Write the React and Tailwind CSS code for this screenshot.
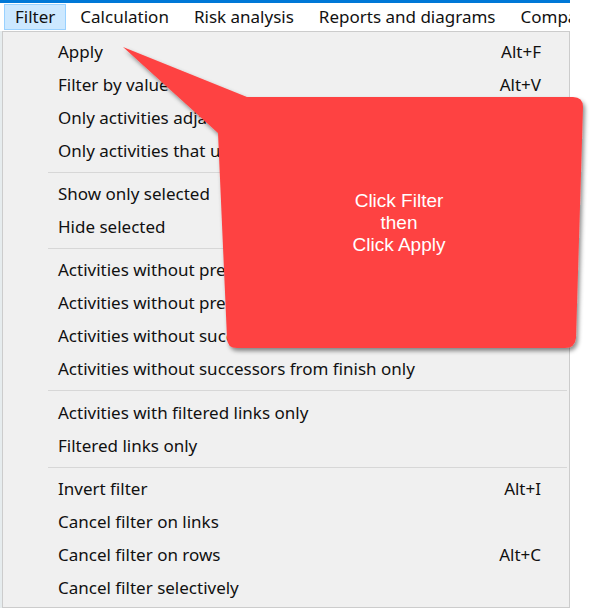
import React from "react";

const topMenu = ["Filter", "Calculation", "Risk analysis", "Reports and diagrams", "Compa"];

const groups = [
  [
    { label: "Apply", key: "Alt+F" },
    { label: "Filter by value", key: "Alt+V" },
    { label: "Only activities adjacent to selected" },
    { label: "Only activities that use selected resources" },
  ],
  [{ label: "Show only selected" }, { label: "Hide selected" }],
  [
    { label: "Activities without predecessors" },
    { label: "Activities without predecessors from start only" },
    { label: "Activities without successors" },
    { label: "Activities without successors from finish only" },
  ],
  [{ label: "Activities with filtered links only" }, { label: "Filtered links only" }],
  [
    { label: "Invert filter", key: "Alt+I" },
    { label: "Cancel filter on links" },
    { label: "Cancel filter on rows", key: "Alt+C" },
    { label: "Cancel filter selectively" },
  ],
];

function MenuRow({ label, shortcut }) {
  return (
    <div className="h-[33px] flex items-center justify-between pl-[55px] pr-[28px] whitespace-nowrap">
      <span>{label}</span>
      {shortcut && <span>{shortcut}</span>}
    </div>
  );
}

function Callout() {
  return (
    <>
      <svg className="absolute left-0 top-0 pointer-events-none" width="595" height="610">
        <defs>
          <filter id="sh" x="-10%" y="-10%" width="130%" height="130%">
            <feDropShadow dx="2" dy="3" stdDeviation="2" floodColor="#000" floodOpacity="0.45" />
          </filter>
        </defs>
        <path
          d="M123,47 L247,97 L573,97 Q583,97 583,107 L576,338 Q575,348 565,348 L237,348 Q227,348 227,338 L218,133 Z"
          fill="#fe4343"
          filter="url(#sh)"
        />
      </svg>
      <div className="absolute left-[299px] top-[190px] w-[200px] text-center text-white text-[19px] leading-[22px] font-['Liberation_Sans',Arial,sans-serif]">
        <div>Click Filter</div>
        <div>then</div>
        <div>Click Apply</div>
      </div>
    </>
  );
}

export default function App() {
  return (
    <div className="relative w-[595px] h-[610px] bg-white overflow-hidden text-[17px] text-[#111111] font-['Noto_Sans',sans-serif]">
      <div className="w-[570px] h-[3px] bg-[#0078d7]" />
      {/* menu bar, last item is cut off like in the app window */}
      <div className="w-[570px] h-[28px] flex items-center pl-[4px] gap-[3px] whitespace-nowrap overflow-hidden">
        {topMenu.map((m, i) => (
          <div
            key={m}
            className={
              i === 0
                ? "h-[26px] flex items-center px-[10px] bg-[#cce8ff] border border-[#99d1ff]"
                : "h-[26px] flex items-center px-[10px] border border-transparent"
            }
          >
            {m}
          </div>
        ))}
      </div>
      <div className="flex">
        <div className="w-[2px] h-[577px] bg-[#e6ecee]" />
        <div className="w-[568px] h-[577px] bg-[#f0f0f0] border border-[#cccccc] pt-[3px] pb-[2px]">
          {groups.map((g, gi) => (
            <div key={gi}>
              {gi > 0 && (
                <div className={gi === 3 ? "h-[11px] flex items-center" : "h-[10px] flex items-center"}>
                  <div className="ml-[45px] mr-[2px] flex-1 h-px bg-[#d7d7d7]" />
                </div>
              )}
              {g.map((r) => (
                <MenuRow key={r.label} label={r.label} shortcut={r.key} />
              ))}
            </div>
          ))}
        </div>
      </div>
      <Callout />
    </div>
  );
}
